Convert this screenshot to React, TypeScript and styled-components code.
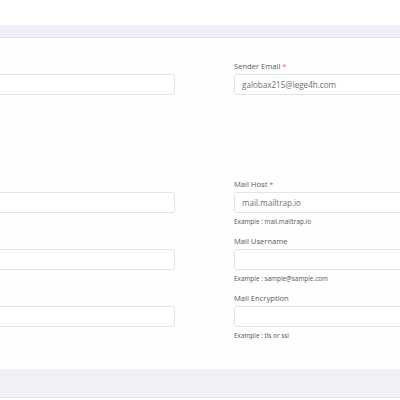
import styled, { createGlobalStyle } from 'styled-components';

const GlobalStyle = createGlobalStyle`
  body {
    margin: 0;
    background: #ffffff;
    font-family: "Open Sans", "Liberation Sans", sans-serif;
  }
`;

type Field = {
  label?: string;
  required?: boolean;
  value?: string;
  help?: string;
};

// left column fields are cut off by the window: only their inputs show
const rows: { left: Field; right: Field; spaced?: boolean }[] = [
  {
    left: {},
    right: { label: 'Sender Email', required: true, value: 'galobax215@lege4h.com' },
    spaced: true,
  },
  {
    left: {},
    right: { label: 'Mail Host', required: true, value: 'mail.mailtrap.io', help: 'Example : mail.mailtrap.io' },
  },
  {
    left: {},
    right: { label: 'Mail Username', help: 'Example : sample@sample.com' },
  },
  {
    left: {},
    right: { label: 'Mail Encryption', help: 'Example : tls or ssl' },
  },
];

const FormField = ({ field }: { field: Field }) => (
  <Group>
    <Label>
      {field.label ?? '\u00a0'}
      {field.required && <Required> *</Required>}
    </Label>
    <Input defaultValue={field.value ?? ''} />
    {field.help && <Help>{field.help}</Help>}
  </Group>
);

const App = () => {
  return (
    <Page>
      <GlobalStyle />
      <TopStrip />
      <Band />
      <CardBody>
        <FormGrid>
          {rows.map((row) => (
            <Row key={row.right.label} $spaced={row.spaced}>
              <FormField field={row.left} />
              <FormField field={row.right} />
            </Row>
          ))}
        </FormGrid>
      </CardBody>
      <FooterBand />
    </Page>
  );
};

export default App;

const Page = styled.div`
  width: 400px;
  height: 400px;
  overflow: hidden;
  background: #ffffff;
`;

const TopStrip = styled.div`
  height: 25px;
  background: #ffffff;
`;

const Band = styled.div`
  height: 12px;
  background: #f0f1f6;
  border-bottom: 1px solid #e4e6eb;
`;

const CardBody = styled.div`
  background: #fefefe;
  padding: 23px 0 19px;
`;

const FormGrid = styled.div`
  margin-left: -200px;
  width: 809px;
  display: flex;
  flex-direction: column;
`;

const Row = styled.div<{ $spaced?: boolean }>`
  display: grid;
  grid-template-columns: 375px 375px;
  column-gap: 59px;
  align-items: start;
  margin-bottom: ${(p) => (p.$spaced ? '74px' : '0')};
`;

const Group = styled.div`
  display: flex;
  flex-direction: column;
  margin-bottom: 10px;
`;

const Label = styled.label`
  font-size: 7.6px;
  line-height: 11px;
  color: #555a60;
  margin-bottom: 2px;
`;

const Required = styled.span`
  color: #f1556c;
`;

const Input = styled.input`
  box-sizing: border-box;
  height: 21px;
  width: 100%;
  border: 1px solid #e2e4e8;
  border-radius: 3px;
  background: #ffffff;
  padding: 0 7px;
  font-family: "Open Sans", "Liberation Sans", sans-serif;
  font-size: 8.1px;
  color: #6b6f75;
  outline: none;
`;

const Help = styled.div`
  margin-top: 4px;
  font-size: 6.4px;
  line-height: 9px;
  color: #50555c;
`;

const FooterBand = styled.div`
  height: 28px;
  background: #f0f1f6;
  border-bottom: 1px solid #e4e6eb;
`;
